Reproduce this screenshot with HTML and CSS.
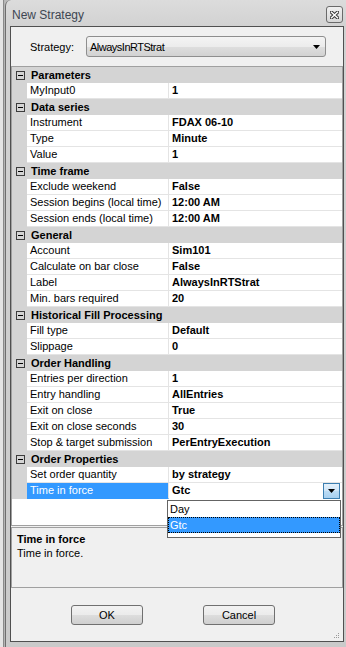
FILE: index.html
```html
<!DOCTYPE html>
<html>
<head>
  <title>New Strategy</title>
  <meta charset="UTF-8">
  <link rel="stylesheet" href="styles.css">
</head>
<body>
  <div class="desktop"></div>
  <div class="window">
    <div class="titlebar">
      <span class="title">New Strategy</span>
      <span class="close-btn">
        <svg width="9" height="8" viewBox="0 0 9 8">
          <path d="M1.5 1.2 L7.5 6.8 M7.5 1.2 L1.5 6.8" stroke="#3b3b3b" stroke-width="3.4" stroke-linecap="square"/>
          <path d="M1.5 1.2 L7.5 6.8 M7.5 1.2 L1.5 6.8" stroke="#ffffff" stroke-width="1.4" stroke-linecap="square"/>
        </svg>
      </span>
    </div>

    <div class="client">
      <div class="strategy-row">
        <label class="strategy-label">Strategy:</label>
        <div class="combo">
          <span>AlwaysInRTStrat</span>
          <svg width="7" height="4" viewBox="0 0 7 4"><path d="M0 0 H7 L3.5 4 Z" fill="#000"/></svg>
        </div>
      </div>

      <div class="grid">
        <div class="cat"><span class="toggle"></span>Parameters</div>
        <div class="prop"><span class="gutter"></span><span class="name">MyInput0</span><span class="val">1</span></div>

        <div class="cat"><span class="toggle"></span>Data series</div>
        <div class="prop"><span class="gutter"></span><span class="name">Instrument</span><span class="val">FDAX 06-10</span></div>
        <div class="prop"><span class="gutter"></span><span class="name">Type</span><span class="val">Minute</span></div>
        <div class="prop"><span class="gutter"></span><span class="name">Value</span><span class="val">1</span></div>

        <div class="cat"><span class="toggle"></span>Time frame</div>
        <div class="prop"><span class="gutter"></span><span class="name">Exclude weekend</span><span class="val">False</span></div>
        <div class="prop"><span class="gutter"></span><span class="name">Session begins (local time)</span><span class="val">12:00 AM</span></div>
        <div class="prop"><span class="gutter"></span><span class="name">Session ends (local time)</span><span class="val">12:00 AM</span></div>

        <div class="cat"><span class="toggle"></span>General</div>
        <div class="prop"><span class="gutter"></span><span class="name">Account</span><span class="val">Sim101</span></div>
        <div class="prop"><span class="gutter"></span><span class="name">Calculate on bar close</span><span class="val">False</span></div>
        <div class="prop"><span class="gutter"></span><span class="name">Label</span><span class="val">AlwaysInRTStrat</span></div>
        <div class="prop"><span class="gutter"></span><span class="name">Min. bars required</span><span class="val">20</span></div>

        <div class="cat"><span class="toggle"></span>Historical Fill Processing</div>
        <div class="prop"><span class="gutter"></span><span class="name">Fill type</span><span class="val">Default</span></div>
        <div class="prop"><span class="gutter"></span><span class="name">Slippage</span><span class="val">0</span></div>

        <div class="cat"><span class="toggle"></span>Order Handling</div>
        <div class="prop"><span class="gutter"></span><span class="name">Entries per direction</span><span class="val">1</span></div>
        <div class="prop"><span class="gutter"></span><span class="name">Entry handling</span><span class="val">AllEntries</span></div>
        <div class="prop"><span class="gutter"></span><span class="name">Exit on close</span><span class="val">True</span></div>
        <div class="prop"><span class="gutter"></span><span class="name">Exit on close seconds</span><span class="val">30</span></div>
        <div class="prop"><span class="gutter"></span><span class="name">Stop &amp; target submission</span><span class="val">PerEntryExecution</span></div>

        <div class="cat"><span class="toggle"></span>Order Properties</div>
        <div class="prop"><span class="gutter"></span><span class="name">Set order quantity</span><span class="val">by strategy</span></div>
        <div class="prop selected">
          <span class="gutter"></span>
          <span class="name">Time in force</span>
          <span class="val editing">
            Gtc
            <span class="drop-btn">
              <svg width="7" height="4" viewBox="0 0 7 4"><path d="M0 0 H7 L3.5 4 Z" fill="#000"/></svg>
            </span>
          </span>
        </div>

        <!-- open list of the Time in force editor -->
        <div class="droplist">
          <div class="item">Day</div>
          <div class="item current">Gtc</div>
        </div>
      </div>

      <div class="help">
        <div class="help-title">Time in force</div>
        <div>Time in force.</div>
      </div>

      <div class="buttons">
        <button>OK</button>
        <button>Cancel</button>
      </div>

      <svg class="grip" width="7" height="7" viewBox="0 0 7 7">
        <rect x="5" y="1" width="1" height="1" fill="#9a9a9a"/>
        <rect x="3" y="3" width="1" height="1" fill="#9a9a9a"/>
        <rect x="5" y="3" width="1" height="1" fill="#9a9a9a"/>
        <rect x="1" y="5" width="1" height="1" fill="#9a9a9a"/>
        <rect x="3" y="5" width="1" height="1" fill="#9a9a9a"/>
        <rect x="5" y="5" width="1" height="1" fill="#9a9a9a"/>
      </svg>
    </div>
  </div>
</body>
</html>
```

FILE: styles.css
```css
:root {
  --grid-gray: #d4d4d4;
  --grid-line: #e4e4e4;
  --select-blue: #3399ff;
  --face: #f0f0f0;
}

* {
  box-sizing: border-box;
}

body {
  width: 346px;
  height: 647px;
  margin: 0;
  overflow: hidden;
  display: flex;
  background: #b9b9b9;
  font-family: "Liberation Sans", Arial, sans-serif;
  font-size: 11px;
  color: #000;
}

.desktop {
  width: 5px;
  flex-shrink: 0;
  background: linear-gradient(90deg, #e4e4e4 0 3px, #8a8a8a 3px 4px, #b5b5b5 4px);
}

.window {
  width: 341px;
  height: 647px;
  flex-shrink: 0;
  display: flex;
  flex-direction: column;
  padding: 0 2px 5px 4px;
  border-left: 1px solid #6e6e6e;
  border-radius: 6px 0 0 0;
  background: linear-gradient(#dcdcdc, #d2d2d2 26px, #cacaca);
}

.titlebar {
  height: 26px;
  flex-shrink: 0;
  display: flex;
  align-items: center;
  justify-content: space-between;
  padding-top: 3px;
}

.title {
  padding-left: 2px;
  font-size: 12px;
  color: #3d4652;
}

.close-btn {
  width: 17px;
  height: 17px;
  margin-right: 1px;
  display: flex;
  align-items: center;
  justify-content: center;
  border: 1px solid #6a6a6a;
  border-radius: 3px;
  background: linear-gradient(#f0f0f0, #d6d6d6);
}

.client {
  position: relative;
  height: 616px;
  display: flex;
  flex-direction: column;
  border: 1px solid #505050;
  background: var(--face);
}

.strategy-row {
  margin-top: 9px;
  padding-left: 19px;
  display: flex;
  align-items: center;
}

.strategy-label {
  width: 56px;
}

.combo {
  width: 240px;
  height: 21px;
  display: flex;
  align-items: center;
  justify-content: space-between;
  padding: 0 5px 0 3px;
  border: 1px solid #8e8e8e;
  border-radius: 3px;
  background: linear-gradient(#f4f4f4 0, #ececec 50%, #dedede 51%, #d2d2d2 100%);
  letter-spacing: -0.5px;
}

/* Property grid */
.grid {
  position: relative;
  height: 460px;
  margin-top: 9px;
  border: 1px solid #a0a0a0;
  background: #fff;
}

.cat {
  height: 16px;
  display: flex;
  align-items: center;
  background: var(--grid-gray);
  font-weight: bold;
}

.toggle {
  position: relative;
  width: 9px;
  height: 9px;
  margin: 0 6px 0 4px;
  border: 1px solid #3c3c3c;
}

.toggle::after {
  content: '';
  position: absolute;
  left: 1px;
  top: 3px;
  width: 5px;
  height: 1px;
  background: #000;
}

.prop {
  height: 16px;
  display: flex;
}

.gutter {
  width: 15px;
  flex-shrink: 0;
  background: var(--grid-gray);
}

.name {
  width: 142px;
  flex-shrink: 0;
  padding-left: 3px;
  line-height: 15px;
  white-space: nowrap;
  overflow: hidden;
  border-right: 1px solid var(--grid-line);
  border-bottom: 1px solid var(--grid-line);
}

.val {
  flex: 1;
  padding-left: 3px;
  line-height: 15px;
  font-weight: bold;
  white-space: nowrap;
  border-bottom: 1px solid var(--grid-line);
}

.selected .name {
  background: var(--select-blue);
  border-bottom-color: var(--select-blue);
  color: #fff;
}

.val.editing {
  display: flex;
  justify-content: space-between;
  border-bottom: none;
  padding-right: 2px;
}

.drop-btn {
  width: 17px;
  height: 16px;
  display: flex;
  align-items: center;
  justify-content: center;
  border: 1px solid #3c7fb1;
  background: linear-gradient(#e5f1fb, #cfe5f7 50%, #bcdcf4 51%, #a7d0f0);
}

.droplist {
  position: absolute;
  left: 155px;
  top: 433px;
  width: 174px;
  height: 38px;
  padding-bottom: 4px;
  border: 1px solid #646464;
  background: #fff;
}

.item {
  height: 16px;
  padding-left: 2px;
  line-height: 16px;
}

.item.current {
  background: var(--select-blue);
  color: #fff;
  border: 1px dotted #000;
  padding-left: 1px;
  line-height: 14px;
}

/* Description pane */
.help {
  height: 61px;
  margin-top: 1px;
  padding: 4px 5px;
  border: 1px solid #a0a0a0;
  line-height: 14px;
}

.help-title {
  font-weight: bold;
}

.buttons {
  margin-top: 17px;
  padding-left: 60px;
  display: flex;
  gap: 60px;
}

button {
  width: 72px;
  height: 20px;
  padding: 0;
  border: 1px solid #707070;
  border-radius: 3px;
  background: linear-gradient(#f2f2f2 0, #ebebeb 50%, #dddddd 51%, #cfcfcf 100%);
  font-family: inherit;
  font-size: 11px;
  color: #000;
}

.grip {
  position: absolute;
  right: 3px;
  bottom: 2px;
}
```
